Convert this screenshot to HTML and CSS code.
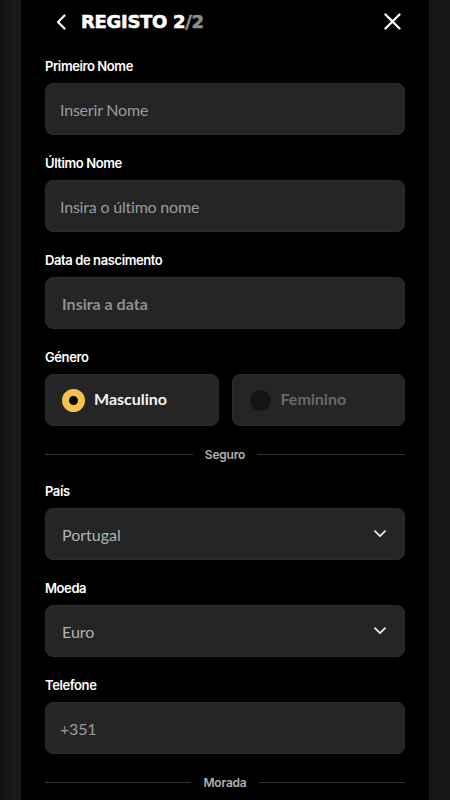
FILE: index.html
```html
<!DOCTYPE html>
<html lang="pt">
<head>
<meta charset="utf-8">
<title>Registo 2/2</title>
<link rel="stylesheet" href="styles.css">
</head>
<body>
<div class="panel">
  <header class="header">
    <button class="icon-btn back" aria-label="Voltar">
      <svg width="10" height="16" viewBox="0 0 10 16"><path d="M8.5 1.5 L2 8 L8.5 14.5" fill="none" stroke="#fff" stroke-width="2.2" stroke-linecap="round" stroke-linejoin="round"/></svg>
    </button>
    <h1 class="title">REGISTO 2<span class="title-dim">/2</span></h1>
    <button class="icon-btn close" aria-label="Fechar">
      <svg width="17" height="17" viewBox="0 0 17 17"><path d="M1.5 1.5 L15.5 15.5 M15.5 1.5 L1.5 15.5" fill="none" stroke="#fff" stroke-width="2.3" stroke-linecap="round"/></svg>
    </button>
  </header>

  <div class="form">
    <div class="field">
      <label class="label">Primeiro Nome</label>
      <div class="input"><span class="placeholder">Inserir Nome</span></div>
    </div>
    <div class="field">
      <label class="label">Último Nome</label>
      <div class="input"><span class="placeholder">Insira o último nome</span></div>
    </div>
    <div class="field">
      <label class="label">Data de nascimento</label>
      <div class="input input-date"><span class="placeholder bold">Insira a data</span></div>
    </div>
    <div class="field">
      <label class="label">Género</label>
      <div class="radios">
        <div class="radio checked"><span class="dot"></span><span class="radio-text">Masculino</span></div>
        <div class="radio"><span class="dot"></span><span class="radio-text">Feminino</span></div>
      </div>
    </div>

    <div class="divider"><span class="line"></span><span class="divider-text">Seguro</span><span class="line"></span></div>

    <div class="field">
      <label class="label">País</label>
      <div class="input select"><span class="value">Portugal</span>
        <svg class="chev" width="12" height="8" viewBox="0 0 12 8"><path d="M1 1.2 L6 6.2 L11 1.2" fill="none" stroke="#e8e8e8" stroke-width="1.8" stroke-linecap="round" stroke-linejoin="round"/></svg>
      </div>
    </div>
    <div class="field">
      <label class="label">Moeda</label>
      <div class="input select"><span class="value">Euro</span>
        <svg class="chev" width="12" height="8" viewBox="0 0 12 8"><path d="M1 1.2 L6 6.2 L11 1.2" fill="none" stroke="#e8e8e8" stroke-width="1.8" stroke-linecap="round" stroke-linejoin="round"/></svg>
      </div>
    </div>
    <div class="field">
      <label class="label">Telefone</label>
      <div class="input"><span class="placeholder">+351</span></div>
    </div>

    <div class="divider"><span class="line"></span><span class="divider-text">Morada</span><span class="line"></span></div>
  </div>
</div>
</body>
</html>
```

FILE: styles.css
```css
html, body {
  margin: 0;
  padding: 0;
}
body {
  background: linear-gradient(90deg, #141414 0%, #1b1b1b 4%, #161616 100%);
  font-family: "Lato", "Inter", sans-serif;
  color: #fff;
  height: 800px;
  overflow: hidden;
}
.panel {
  width: 408px;
  margin: 0 auto;
  background: #000;
  min-height: 800px;
  padding: 0 24px;
  box-sizing: border-box;
}
.header {
  height: 43px;
  margin-bottom: 15px;
  display: flex;
  align-items: center;
}
.icon-btn {
  background: none;
  border: 0;
  padding: 0;
  display: flex;
  align-items: center;
  justify-content: center;
  cursor: pointer;
}
.back {
  width: 16px;
  margin-left: 8px;
  margin-right: 12px;
}
.title {
  margin: 0;
  font-family: "DejaVu Sans", "Inter", sans-serif;
  font-weight: 700;
  font-size: 18px;
  letter-spacing: -0.3px;
  -webkit-text-stroke: 0.6px;
  color: #fff;
  flex: 1;
  line-height: 1;
  padding-top: 1px;
}
.title-dim {
  color: #8c8c8c;
}
.close {
  width: 17px;
  margin-right: 4px;
}
.form {
  display: flex;
  flex-direction: column;
  gap: 20px;
}
.field {
  display: flex;
  flex-direction: column;
  gap: 8px;
}
.label {
  font-family: "Inter", sans-serif;
  font-weight: 600;
  font-size: 13px;
  line-height: 17px;
  letter-spacing: -0.4px;
  color: #fff;
}
.input {
  height: 52px;
  box-sizing: border-box;
  background: #252525;
  border: 1px solid #2c2c2c;
  border-radius: 8px;
  display: flex;
  align-items: center;
  padding: 0 18px 0 14px;
}
.placeholder {
  font-size: 16px;
  color: #9a9a9a;
  letter-spacing: -0.2px;
}
.placeholder.bold {
  font-weight: 700;
  color: #8f8f8f;
  letter-spacing: 0;
}
.input-date {
  padding-left: 16px;
}
.select {
  padding-left: 16px;
  justify-content: space-between;
}
.value {
  font-size: 16px;
  color: #b2b2b2;
}
.radios {
  display: flex;
  gap: 13px;
}
.radio {
  flex: 1;
  height: 52px;
  box-sizing: border-box;
  background: #252525;
  border: 1px solid #2c2c2c;
  border-radius: 8px;
  display: flex;
  align-items: center;
  padding-left: 16px;
  gap: 9px;
}
.dot {
  width: 23px;
  height: 23px;
  border-radius: 50%;
  box-sizing: border-box;
  background: #141414;
  border: 1px solid #2a2a2a;
}
.radio.checked .dot {
  background: #000;
  border: 7.5px solid #f3c24f;
}
.radio-text {
  font-size: 16px;
  font-weight: 700;
  color: #686868;
  line-height: 20px;
  padding-bottom: 2px;
}
.radio.checked .radio-text {
  color: #f2f2f2;
}
.divider {
  height: 17px;
  display: flex;
  align-items: center;
  gap: 12px;
}
.line {
  flex: 1;
  height: 1px;
  background: #333;
}
.divider-text {
  font-family: "Inter", sans-serif;
  font-weight: 600;
  font-size: 12px;
  color: #b0b0b0;
  letter-spacing: -0.2px;
}
```
